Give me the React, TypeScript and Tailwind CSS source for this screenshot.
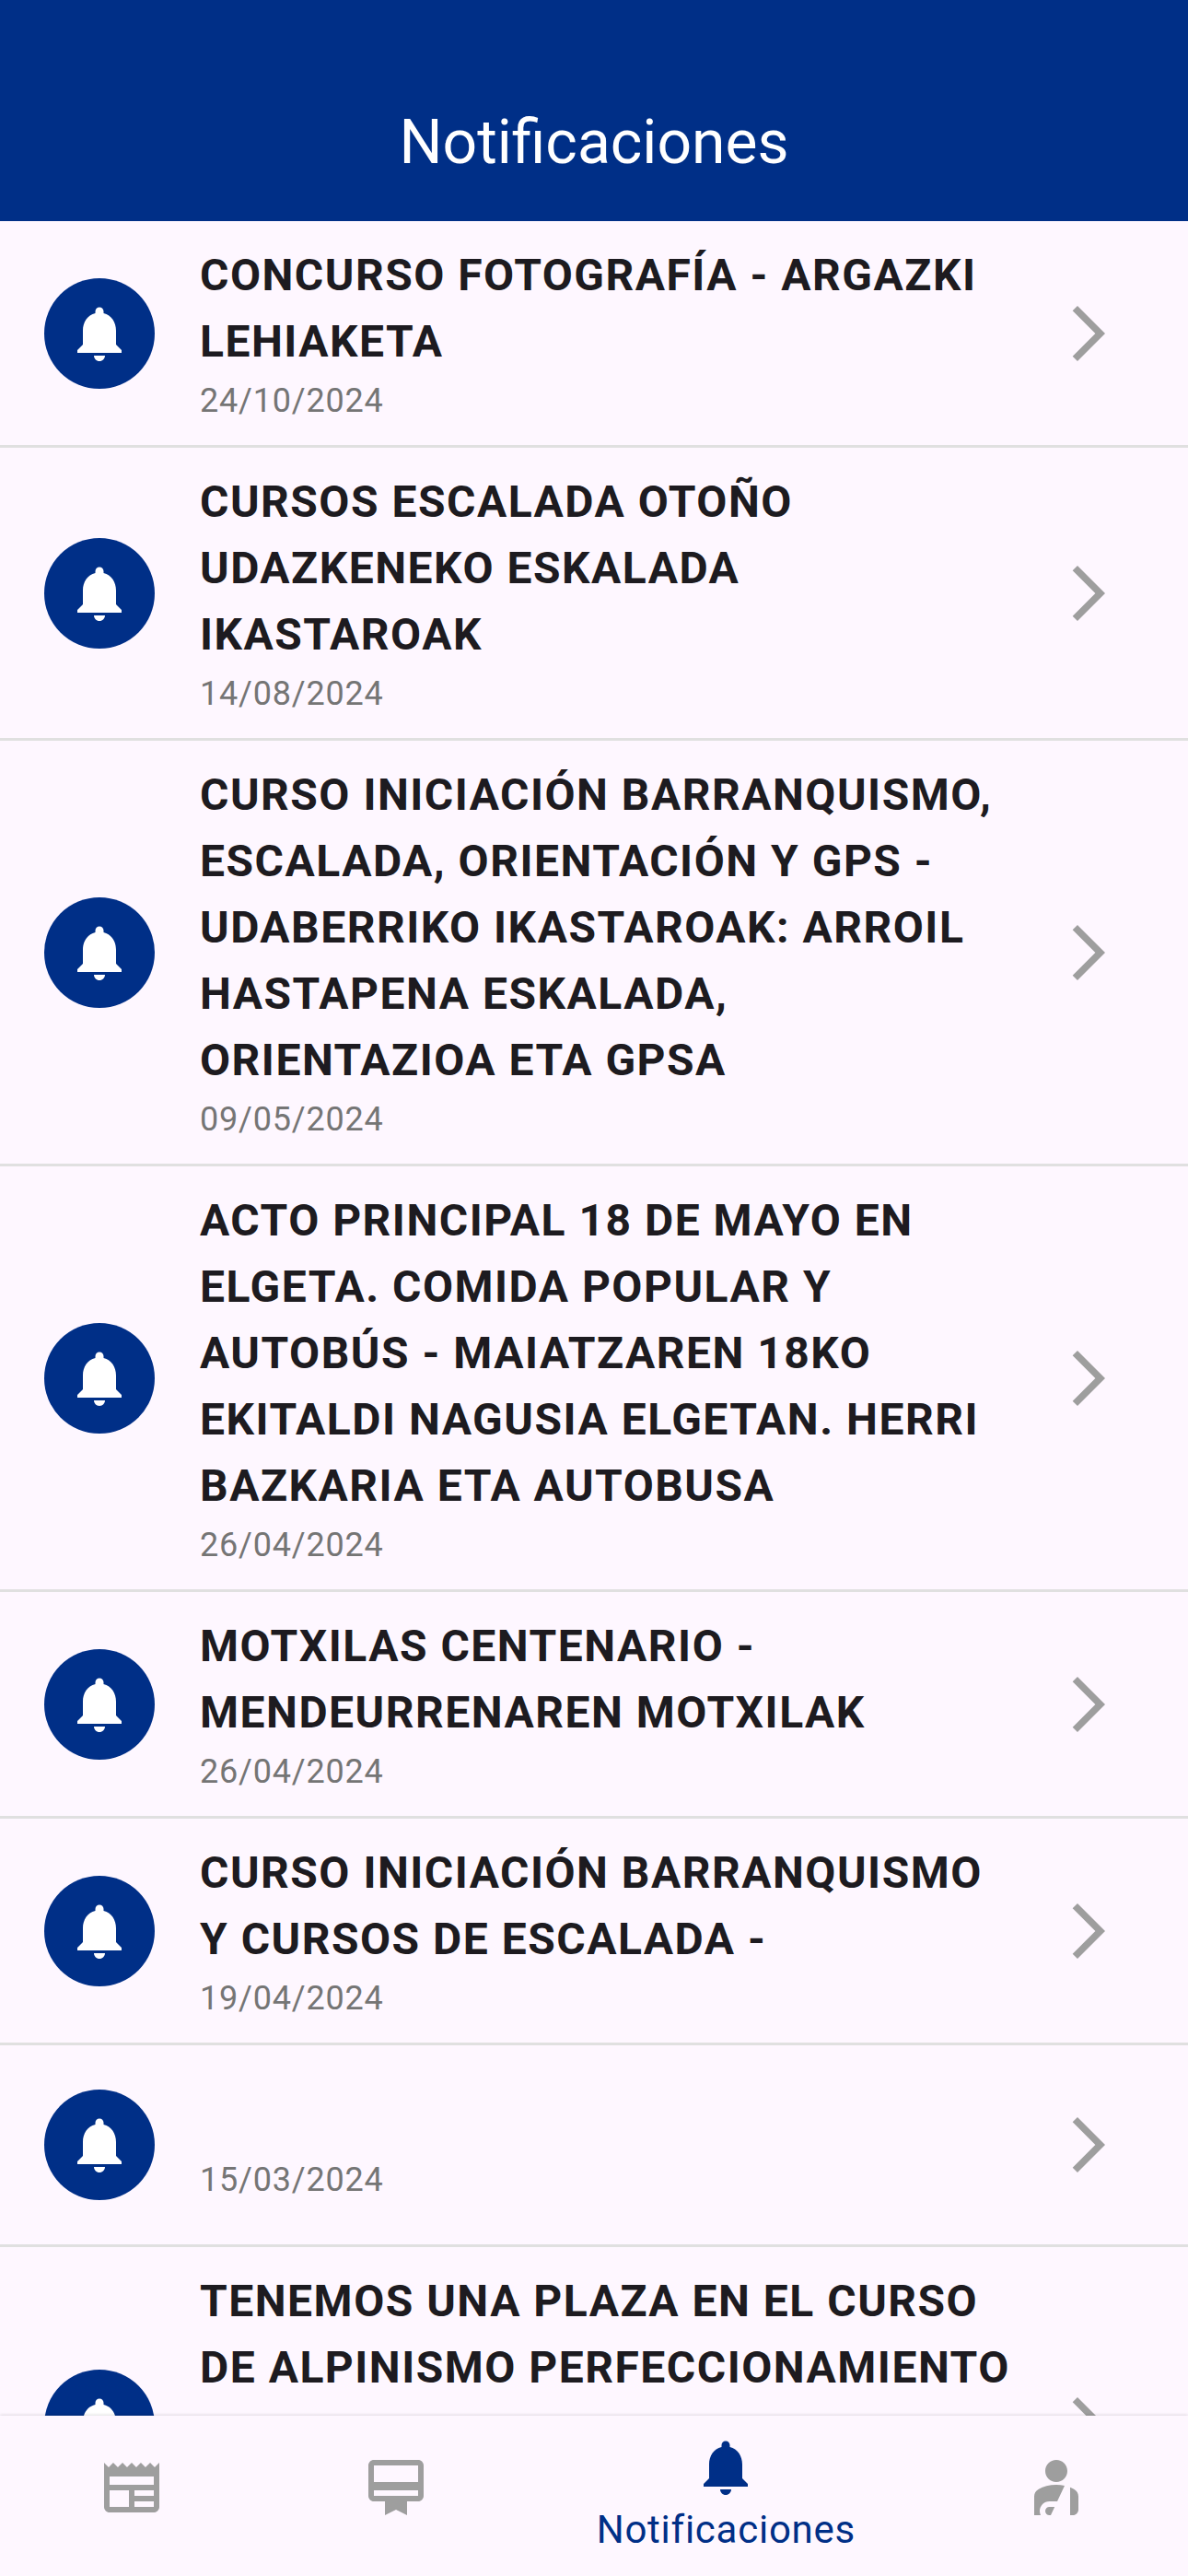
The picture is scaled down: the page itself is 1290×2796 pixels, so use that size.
const BELL = "M12 22c1.1 0 2-.9 2-2h-4c0 1.1.89 2 2 2zm6-6v-5c0-3.07-1.64-5.64-4.5-6.32V4c0-.83-.67-1.5-1.5-1.5s-1.5.67-1.5 1.5v.68C7.63 5.36 6 7.92 6 11v5l-2 2v1h16v-1l-2-2z";
const NEWS = "M22 3l-1.67 1.67L18.67 3 17 4.67 15.33 3l-1.67 1.67L12 3l-1.67 1.67L8.67 3 7 4.67 5.33 3 3.67 4.67 2 3v16c0 1.1.9 2 2 2h16c1.1 0 2-.9 2-2V3zM11 19H4v-6h7v6zm9 0h-7v-2h7v2zm0-4h-7v-2h7v2zm0-4H4V8h16v3z";
const CARD = "M20 2H4c-1.11 0-2 .89-2 2v11c0 1.11.89 2 2 2h4v5l4-2 4 2v-5h4c1.11 0 2-.89 2-2V4c0-1.11-.89-2-2-2zm0 13H4v-2h16v2zm0-5H4V4h16v6z";
const INJURY = "M8,6c0-2.21,1.79-4,4-4s4,1.79,4,4c0,2.21-1.79,4-4,4S8,8.21,8,6z M17,22h1c1.1,0,2-0.9,2-2l0-4.78c0-1.12-0.61-2.15-1.61-2.66 c-0.43-0.22-0.9-0.43-1.39-0.62L17,22z M12.34,17L15,11.33C14.07,11.12,13.07,11,12,11c-2.53,0-4.71,0.7-6.39,1.56 C4.61,13.07,4,14.1,4,15.22L4,22h2.34c-0.22-0.45-0.34-0.96-0.34-1.5C6,18.57,7.57,17,9.5,17H12.34z M10,22l1.41-3H9.5 C8.67,19,8,19.67,8,20.5S8.67,22,9.5,22H10z";
const CHEVRON = "M6.23 20.23 8 22l10-10L8 2 6.23 3.77 14.46 12z";

const Icon = ({ d, className }: { d: string, className: string }) => (
  <svg viewBox="0 0 24 24" fill="currentColor" className={className}>
    <path d={d} />
  </svg>
);

const items = [
  { title: "CONCURSO FOTOGRAFÍA - ARGAZKI LEHIAKETA", date: "24/10/2024" },
  { title: "CURSOS ESCALADA OTOÑO UDAZKENEKO ESKALADA IKASTAROAK", date: "14/08/2024" },
  { title: "CURSO INICIACIÓN BARRANQUISMO, ESCALADA, ORIENTACIÓN Y GPS - UDABERRIKO IKASTAROAK: ARROIL HASTAPENA ESKALADA, ORIENTAZIOA ETA GPSA", date: "09/05/2024" },
  { title: "ACTO PRINCIPAL 18 DE MAYO EN ELGETA. COMIDA POPULAR Y AUTOBÚS - MAIATZAREN 18KO EKITALDI NAGUSIA ELGETAN. HERRI BAZKARIA ETA AUTOBUSA", date: "26/04/2024" },
  { title: "MOTXILAS CENTENARIO - MENDEURRENAREN MOTXILAK", date: "26/04/2024" },
  { title: "CURSO INICIACIÓN BARRANQUISMO Y CURSOS DE ESCALADA -", date: "19/04/2024" },
  { title: "", date: "15/03/2024" },
];

const Row = ({ title, date }: { title: string, date: string }) => (
  <div className="flex items-center border-b-[3px] border-[#e0e0e0] py-6 pl-12 pr-[72px]">
    <div className="my-6 flex h-[120px] w-[120px] shrink-0 items-center justify-center rounded-full bg-[#002f87] text-white">
      <Icon d={BELL} className="h-[72px] w-[72px]" />
    </div>
    <div className="min-w-0 flex-1 pl-[49px] pr-[47px]">
      <p className="-mt-px min-h-[72px] text-[48px] leading-[72px] font-bold tracking-[1.5px] text-[#1d1b20]">{title}</p>
      <p className="mt-1 text-[36px] leading-[48px] tracking-[0.8px] text-[#757575]">{date}</p>
    </div>
    <Icon d={CHEVRON} className="h-[72px] w-[72px] shrink-0 text-[#9e9e9e]" />
  </div>
);

const NavTab = ({ d }: { d: string }) => (
  <div className="flex flex-[2] justify-center pt-[42px]">
    <Icon d={d} className="h-[72px] w-[72px] text-[#9e9e9e]" />
  </div>
);

export default function App() {
  return (
    <div className="flex h-[2796px] w-[1290px] flex-col overflow-hidden bg-[#fef7ff] font-['Roboto',sans-serif]">
      <header className="flex h-[240px] shrink-0 items-end justify-center bg-[#002f87] pb-[43px]">
        <h1 className="text-[66px] leading-[84px] font-normal text-white">Notificaciones</h1>
      </header>
      <main className="min-h-0 flex-1 overflow-hidden">
        {items.map((item, i) => (
          <Row key={i} title={item.title} date={item.date} />
        ))}
        <div className="flex min-h-[386px] items-center py-6 pl-12 pr-[72px]">
          <div className="my-6 flex h-[120px] w-[120px] shrink-0 items-center justify-center rounded-full bg-[#002f87] text-white">
            <Icon d={BELL} className="h-[72px] w-[72px]" />
          </div>
          <div className="min-w-0 flex-1 self-start pl-[49px] pr-[47px]">
            <p className="-mt-px text-[48px] leading-[72px] font-bold tracking-[1.5px] text-[#1d1b20]">TENEMOS UNA PLAZA EN EL CURSO DE ALPINISMO PERFECCIONAMIENTO</p>
          </div>
          <Icon d={CHEVRON} className="h-[72px] w-[72px] shrink-0 text-[#9e9e9e]" />
        </div>
      </main>
      <nav className="relative flex h-[174px] shrink-0 bg-[#fef7ff] shadow-[0_-1px_3px_rgba(0,0,0,0.12)]">
        <NavTab d={NEWS} />
        <NavTab d={CARD} />
        <div className="flex flex-[3] flex-col items-center pt-5">
          <Icon d={BELL} className="h-[72px] w-[72px] text-[#002f87]" />
          <span className="mt-[8px] text-[42px] leading-[48px] tracking-[0.75px] text-[#002f87]">Notificaciones</span>
        </div>
        <NavTab d={INJURY} />
      </nav>
    </div>
  );
}
